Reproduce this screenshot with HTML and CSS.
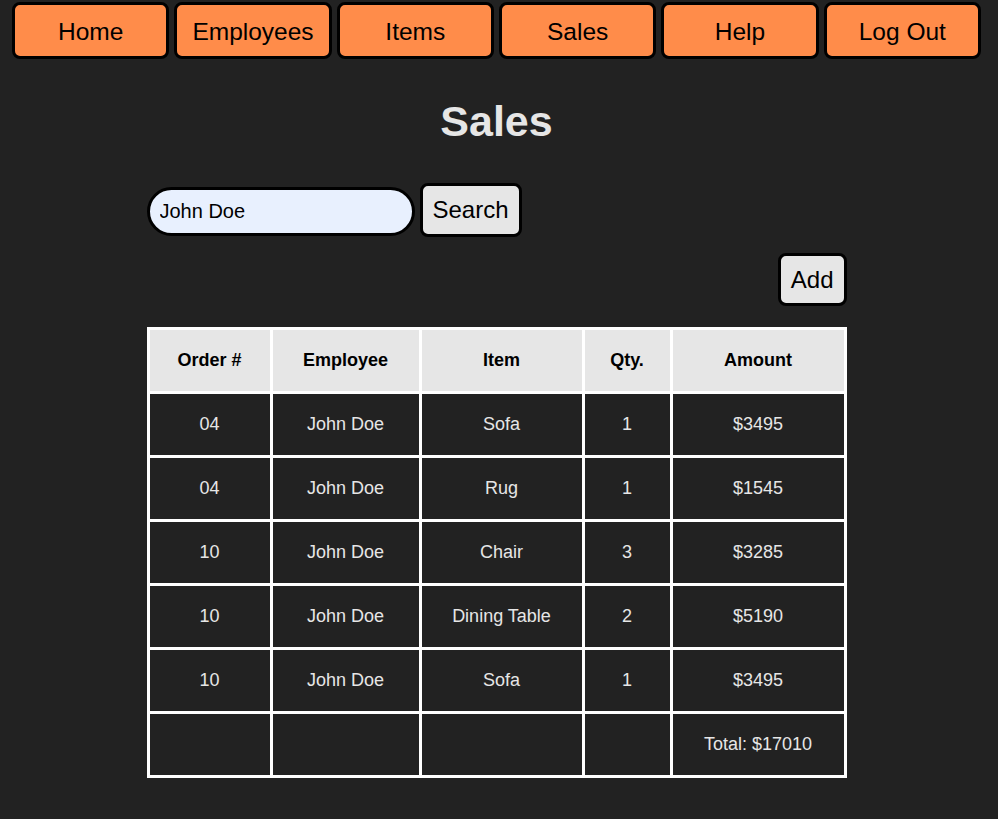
FILE: index.html
```html
<!DOCTYPE html>
<html lang="en">
<head>
<meta charset="utf-8">
<title>Sales</title>
<link rel="stylesheet" href="styles.css">
</head>
<body>
<nav class="nav">
  <a class="nav-btn" href="#">Home</a>
  <a class="nav-btn" href="#">Employees</a>
  <a class="nav-btn" href="#">Items</a>
  <a class="nav-btn" href="#">Sales</a>
  <a class="nav-btn" href="#">Help</a>
  <a class="nav-btn" href="#">Log Out</a>
</nav>
<main class="main">
  <h1 class="title">Sales</h1>
  <div class="search-row">
    <input class="search-input" type="text" value="John Doe">
    <button class="btn search-btn">Search</button>
  </div>
  <div class="add-row">
    <button class="btn add-btn">Add</button>
  </div>
  <table class="sales-table">
    <thead>
      <tr>
        <th class="c1">Order #</th>
        <th class="c2">Employee</th>
        <th class="c3">Item</th>
        <th class="c4">Qty.</th>
        <th class="c5">Amount</th>
      </tr>
    </thead>
    <tbody>
      <tr><td>04</td><td>John Doe</td><td>Sofa</td><td>1</td><td>$3495</td></tr>
      <tr><td>04</td><td>John Doe</td><td>Rug</td><td>1</td><td>$1545</td></tr>
      <tr><td>10</td><td>John Doe</td><td>Chair</td><td>3</td><td>$3285</td></tr>
      <tr><td>10</td><td>John Doe</td><td>Dining Table</td><td>2</td><td>$5190</td></tr>
      <tr><td>10</td><td>John Doe</td><td>Sofa</td><td>1</td><td>$3495</td></tr>
      <tr><td></td><td></td><td></td><td></td><td>Total: $17010</td></tr>
    </tbody>
  </table>
</main>
</body>
</html>
```

FILE: styles.css
```css
html, body {
  margin: 0;
  background: #222222;
}

body {
  font-family: "Liberation Sans", Arial, sans-serif;
  padding: 2px 17px 0 12px;
  min-height: 819px;
  box-sizing: border-box;
}

.nav {
  display: flex;
  gap: 5px;
}

.nav-btn {
  flex: 1;
  height: 57px;
  box-sizing: border-box;
  display: flex;
  align-items: center;
  justify-content: center;
  padding-top: 3px;
  background: #ff8c4a;
  border: 3px solid #000;
  border-radius: 8px;
  color: #000;
  text-decoration: none;
  font-size: 24.5px;
}

.main {
  width: 700px;
  margin: 0 auto;
  display: flex;
  flex-direction: column;
}

.title {
  margin: 38px 0 0;
  text-align: center;
  font-size: 43px;
  line-height: 49px;
  font-weight: bold;
  color: #e6e6e6;
}

.search-row {
  margin-top: 37px;
  display: flex;
  align-items: baseline;
  gap: 5px;
}

.search-input {
  width: 268px;
  height: 49px;
  box-sizing: border-box;
  border: 3px solid #000;
  border-radius: 25px;
  background: #e8f0fe;
  padding: 0 10px;
  font-family: "Liberation Sans", Arial, sans-serif;
  font-size: 20px;
  color: #000;
  outline: none;
}

.btn {
  box-sizing: border-box;
  background: #e6e6e6;
  border: 3px solid #000;
  border-radius: 8px;
  color: #000;
  font-family: "Liberation Sans", Arial, sans-serif;
  font-size: 24px;
  padding: 0 10px;
}

.search-btn {
  height: 54px;
}

.add-row {
  margin-top: 16px;
  display: flex;
  justify-content: flex-end;
}

.add-btn {
  height: 53px;
}

.sales-table {
  margin-top: 21px;
  width: 700px;
  border-collapse: separate;
  border-spacing: 3px;
  background: #ffffff;
  table-layout: fixed;
}

.sales-table th,
.sales-table td {
  height: 61px;
  padding: 0;
  text-align: center;
  vertical-align: middle;
  font-size: 18px;
}

.sales-table th {
  background: #e6e6e6;
  color: #000;
  font-weight: bold;
}

.sales-table td {
  background: #222222;
  color: #e6e6e6;
}

.c1 { width: 120px; }
.c2 { width: 146px; }
.c3 { width: 160px; }
.c4 { width: 85px; }
.c5 { width: 171px; }
```
